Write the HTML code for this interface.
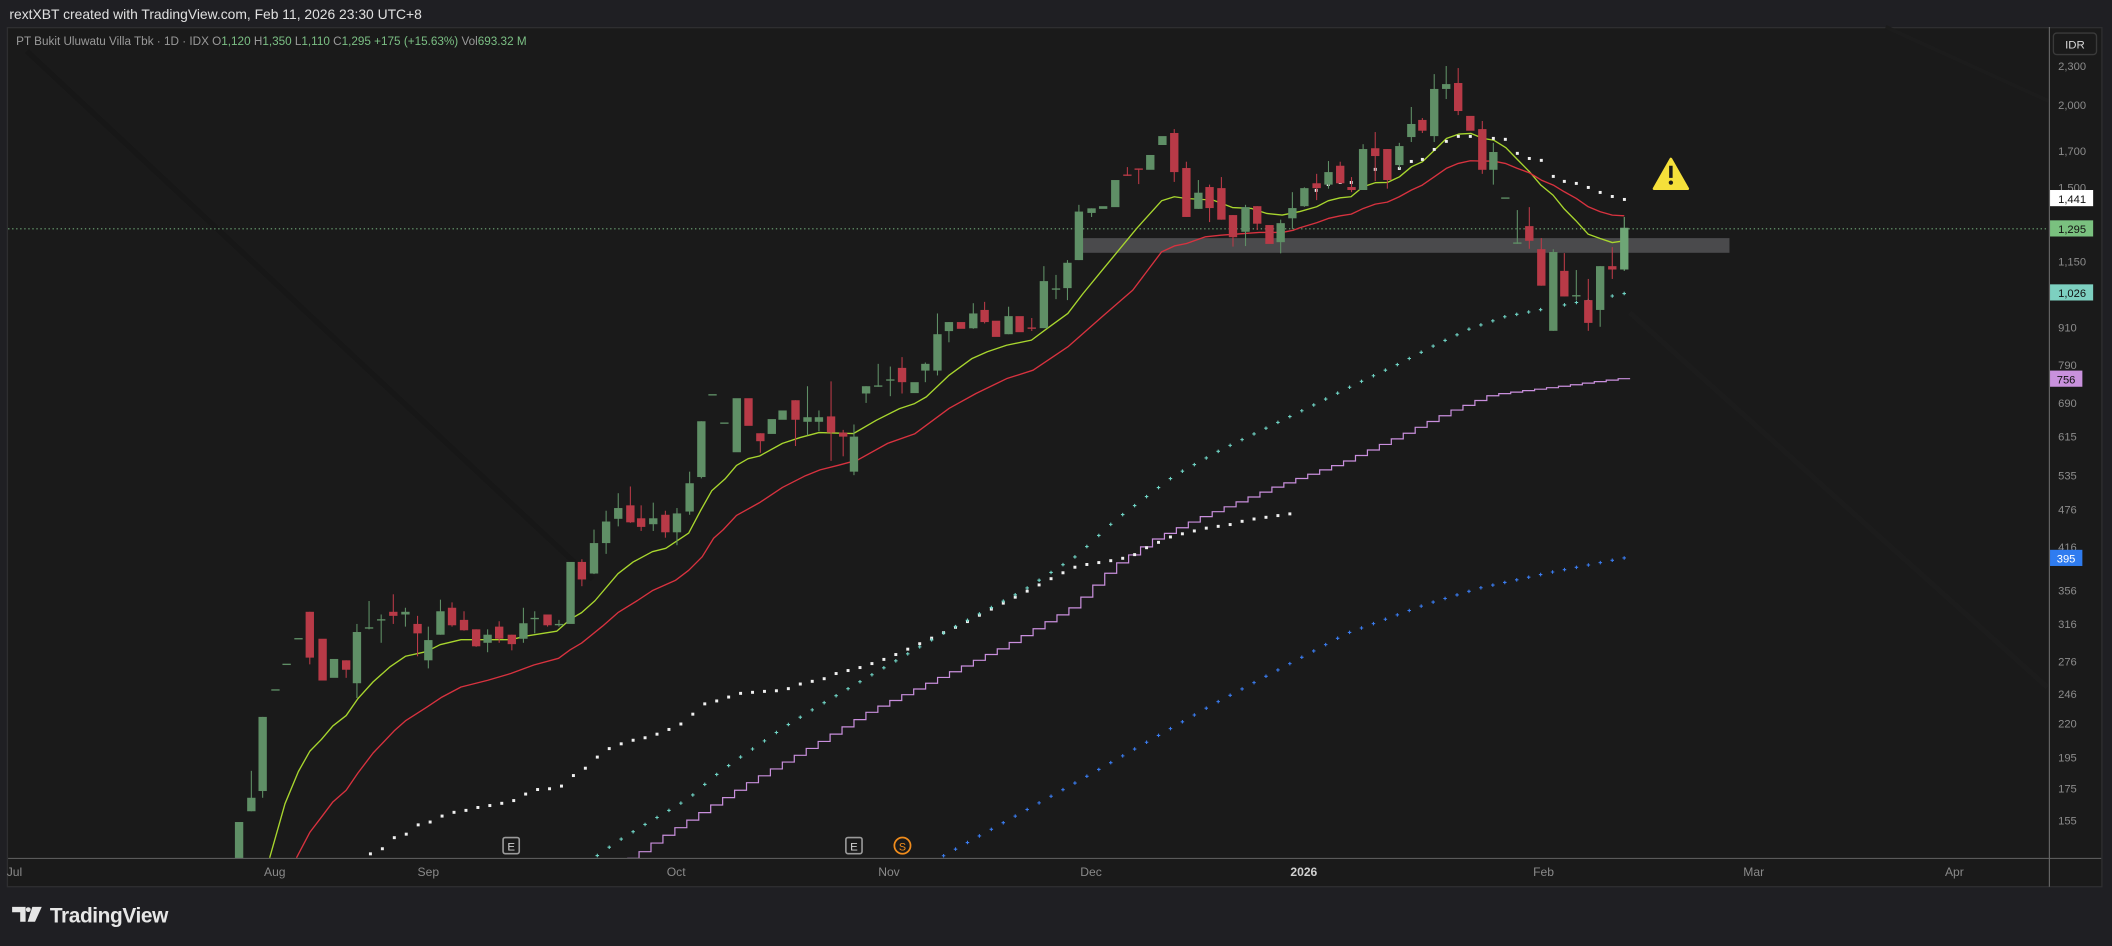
<!DOCTYPE html>
<html><head><meta charset="utf-8"><style>
html,body{margin:0;padding:0;background:#1f1f23;}
svg{display:block;}
text{font-family:"Liberation Sans","DejaVu Sans",sans-serif;}
</style></head><body>
<svg id="s" width="2112" height="946" viewBox="0 0 1568 702" preserveAspectRatio="none" xmlns="http://www.w3.org/2000/svg">
<rect x="0" y="0" width="1568" height="702" fill="#1f1f23"/>
<text x="7" y="14" font-size="10.3" fill="#e0e0e0">rextXBT created with TradingView.com, Feb 11, 2026 23:30 UTC+8</text>
<rect x="5.5" y="20.5" width="1555" height="637.5" fill="#1a1a1a" stroke="#2e2e30" stroke-width="1"/>
<line x1="20" y1="38" x2="440" y2="430" stroke="#171717" stroke-width="4"/>
<line x1="1210" y1="232" x2="1520" y2="510" stroke="#1c1c1c" stroke-width="4"/>
<line x1="1400" y1="20" x2="1521" y2="75" stroke="#1c1c1c" stroke-width="3"/>
<rect x="802" y="176.7" width="482" height="10.9" fill="#4a4a4c"/>
<line x1="6" y1="169.8" x2="1521" y2="169.8" stroke="#6fa877" stroke-width="0.8" stroke-dasharray="1,2"/>
<g id="ind"></g>
<g id="cd"></g>
<line x1="6" y1="637" x2="1560" y2="637" stroke="#5a5a5a" stroke-width="0.8"/>
<line x1="1521.5" y1="20" x2="1521.5" y2="658" stroke="#6a6a6a" stroke-width="0.8"/>
<text x="12" y="33.5" font-size="8.7" fill="#9a9a9a">PT Bukit Uluwatu Villa Tbk · 1D · IDX  <tspan>O</tspan><tspan fill="#7bbf84">1,120</tspan>  H<tspan fill="#7bbf84">1,350</tspan>  L<tspan fill="#7bbf84">1,110</tspan>  C<tspan fill="#7bbf84">1,295</tspan>  <tspan fill="#7bbf84">+175 (+15.63%)</tspan>  Vol<tspan fill="#7bbf84">693.32 M</tspan></text>
<path d="M1240.5 118 L1253 140 L1228 140 Z" fill="#f5e03a" stroke="#f5e03a" stroke-width="2" stroke-linejoin="round"/>
<rect x="1239.2" y="123" width="2.6" height="9" fill="#1a1a1a"/>
<circle cx="1240.5" cy="135.5" r="1.6" fill="#1a1a1a"/>
<rect x="373.5" y="621.5" width="12" height="12" rx="1.5" fill="#1a1a1a" stroke="#9a9a9a" stroke-width="1.2"/>
<text x="379.5" y="631" font-size="8.5" fill="#cfcfcf" text-anchor="middle">E</text>
<rect x="628" y="621.5" width="12" height="12" rx="1.5" fill="#1a1a1a" stroke="#9a9a9a" stroke-width="1.2"/>
<text x="634" y="631" font-size="8.5" fill="#cfcfcf" text-anchor="middle">E</text>
<circle cx="670" cy="627.5" r="6" fill="#1a1a1a" stroke="#f08c1c" stroke-width="1.3"/>
<text x="670" y="631" font-size="8" fill="#f08c1c" text-anchor="middle">S</text>
<g font-size="9" fill="#8a8a8a">
<text x="5" y="650">Jul</text>
<text x="204" y="650" text-anchor="middle">Aug</text>
<text x="318" y="650" text-anchor="middle">Sep</text>
<text x="502" y="650" text-anchor="middle">Oct</text>
<text x="660" y="650" text-anchor="middle">Nov</text>
<text x="810" y="650" text-anchor="middle">Dec</text>
<text x="968" y="650" text-anchor="middle" fill="#d0d0d0" font-weight="bold">2026</text>
<text x="1146" y="650" text-anchor="middle">Feb</text>
<text x="1302" y="650" text-anchor="middle">Mar</text>
<text x="1451" y="650" text-anchor="middle">Apr</text>
</g>
<rect x="1524.5" y="24.5" width="32" height="16" rx="2.5" fill="#1a1a1a" stroke="#3a3a3a"/>
<text x="1540.5" y="36" font-size="8.5" fill="#d8d8d8" text-anchor="middle">IDR</text>
<g font-size="8.3" fill="#8c8c8c">
<text x="1528" y="52">2,300</text>
<text x="1528" y="81">2,000</text>
<text x="1528" y="115">1,700</text>
<text x="1528" y="142">1,500</text>
<text x="1528" y="197">1,150</text>
<text x="1528" y="246">910</text>
<text x="1528" y="274">790</text>
<text x="1528" y="302">690</text>
<text x="1528" y="327">615</text>
<text x="1528" y="356">535</text>
<text x="1528" y="381">476</text>
<text x="1528" y="409">416</text>
<text x="1528" y="441">356</text>
<text x="1528" y="466">316</text>
<text x="1528" y="494">276</text>
<text x="1528" y="518">246</text>
<text x="1528" y="540">220</text>
<text x="1528" y="565">195</text>
<text x="1528" y="588">175</text>
<text x="1528" y="612">155</text>
</g>
<rect x="1522" y="141" width="32" height="12" fill="#ffffff"/>
<text x="1528" y="150.5" font-size="8.3" fill="#111">1,441</text>
<rect x="1522" y="163.5" width="32" height="12" fill="#7ac17f"/>
<text x="1528" y="173" font-size="8.3" fill="#111">1,295</text>
<rect x="1522" y="211" width="32" height="12" fill="#7dd0c0"/>
<text x="1528" y="220.5" font-size="8.3" fill="#111">1,026</text>
<rect x="1522" y="275" width="24" height="12" fill="#c991dd"/>
<text x="1527" y="284.5" font-size="8.3" fill="#111">756</text>
<rect x="1522" y="408" width="24" height="12" fill="#2f7cf0"/>
<text x="1527" y="417.5" font-size="8.3" fill="#fff">395</text>
<g fill="#e6e6e6">
<path d="M9 673 H19 V684 H15 V677 H9 Z"/>
<circle cx="21" cy="675" r="1.8"/>
<path d="M24 673 H31 L26 684 H20.5 Z"/>
</g>
<text x="37" y="684.5" font-size="15.5" font-weight="bold" fill="#e6e6e6" letter-spacing="-0.3">TradingView</text>
</svg>
<script>
var NS="http://www.w3.org/2000/svg";
function el(p,t,a){var e=document.createElementNS(NS,t);for(var k in a)e.setAttribute(k,a[k]);p.appendChild(e);return e;}
var G="#5f8f66",R="#b83a47";
var C=[
[177.5,610,637,0,0,G],[186.6,592,602,572,602,G],[195,532,587,532,592,G],[204.5,511.5,512.5,0,0,G],[212.8,492.5,493.5,0,0,G],[221.6,473.5,474.5,0,0,G],
[230,454,488,454,493,R],[239.5,474,505,0,0,R],[248,489,503,0,0,G],[257,490,497,490,503,R],[265,469,507,463,518,G],[274,465.5,466.5,446,467,G],
[283,459.5,460.5,456,477,G],[292,454,457,441,463,R],[301,454,456,451,465,G],[310,463,470,457,487,R],[318,475,490,465,496,G],[327,453.6,471,445,471,G],
[335.6,451,464,447,465,R],[344.5,460,467.7,453.6,468,R],[353.5,467,479.6,467,480,R],[362,471,477,467,484,G],[370.6,465,474,461,477,R],[380,471,478,471,482.6,R],
[388.6,462.5,474,451,477,G],[397,458.5,459.5,453.6,470,G],[406.5,456,464,456,465,R],[415,463,464,460,465,G],[423.6,417,463,0,0,G],[432,417,430,415,435,R],
[441,403,425.6,393,426,G],[450,387,403,379,411,G],[459,377,385,366,390.6,G],[468,375,387.6,361,388,R],[476,384.6,391,375,394,R],[485,384.6,389,373,394,G],
[494,382,395,379,399,R],[502.6,381,395,377,404.6,G],[512,358.6,379.6,350,382,G],[520.7,312.6,354,312.6,355,G],[529,292.5,293.5,0,0,G],[537.8,313.5,314.5,0,0,G],
[547,295.5,335.6,0,0,G],[555.7,295.5,316,0,0,R],[564.5,321.5,327.4,321.5,336,R],[573,311,322,0,0,G],[581,304.6,311.5,0,0,G],[590.6,297,311.5,297,331,R],
[599.5,309.6,313,286.6,323,G],[608,309.6,313,304.6,320,G],[617,309,321,283,342,R],[626,321,324,319,338.6,R],[634,324,350,315,352.6,G],[643,286.6,292,286.6,299,G],
[652,286,287,270,287,G],[661,281.5,282.5,272,294,G],[669.7,273,283.6,265,292,R],[679,283.6,291.7,0,0,G],[687,270,275,269,283.6,G],[696,248,275,232.6,278.6,G],
[704.5,239,245.7,239,254,G],[713.5,239,244,0,0,R],[722.6,232.6,243.6,225,244,G],[731,230,239,224,240,R],[739.5,238,250,0,0,R],[748.8,234.6,248,227.6,248,G],
[757,234.6,246.5,0,0,R],[766,243,244,236,245.6,R],[775,208.6,243.5,197.5,243.5,G],[784,214,215,204,222,G],[792.5,195,213.8,193,222.7,G],[801,157,193,152,193,G],
[810.4,154.6,158,154.6,161,G],[819,153,155,0,0,G],[828,133.6,153.7,0,0,G],[837,129.5,130.5,124,130.5,R],[845.4,125,126,125,136.6,R],[854,115,126,0,0,G],
[863,101,107.6,0,0,G],[871.8,98.7,127.7,95.8,135,R],[880.8,124.7,161,120,161,R],[889.7,143,155,133.6,155,G],[898,138.8,154.4,137,164.8,R],[906.8,139.6,163,131.4,163,R],
[915.4,159.6,176,159.6,183,R],[924.7,153.7,172,152,182.6,G],[933.4,153,166,153,170.7,R],[942.5,167,181,0,0,R],[950.8,165.6,179.7,163,188,G],[959.5,154.4,162,142.6,170,G],
[968.4,139.6,153,139,153.5,G],[977.5,136,139.6,129,148.5,R],[986.3,127.7,137,119.5,140,G],[995,123,136,120,136,R],[1003.4,138.8,141,131.4,142.6,R],[1012,110.6,141,107,141,G],
[1021,110,115.8,98,134.4,R],[1030,110.6,133.6,110.6,140,R],[1038.9,108.4,122.5,106,125,G],[1047.8,92,101.7,79.4,105.4,G],[1056,89,97,87.6,98.7,R],[1064.8,66,101,55,105.4,G],
[1073.7,62.4,66,49,73.5,G],[1082.6,61.6,82.4,50.5,85.4,R],[1091.6,86,97,0,0,R],[1100.5,95.8,126,89.8,129,R],[1108.7,112.8,126,106,137,G],[1117.6,146.5,147.5,0,0,G],
[1126.5,179.9,180.9,155.9,180.9,G],[1135.4,167.8,178.7,153.7,184.6,R],[1144.3,184.9,212,176.7,212,R],[1153.2,187,245.5,185,245.5,G],[1161.4,201,220,187.8,220,R],
[1170.3,219,220,200.4,222.7,G],[1179.2,222.7,239.6,207,245.5,R],[1188,197.5,230,197.5,242.5,G],[1197,197.5,200,183.4,207,R],[1205.9,169,200,161,201,"#6ea676"]
];
var ind=document.getElementById("ind"),cd=document.getElementById("cd");
function interp(P,x){if(x<=P[0][0])return P[0][1];for(var i=1;i<P.length;i++){if(x<=P[i][0]){var a=P[i-1],b=P[i];return a[1]+(b[1]-a[1])*(x-a[0])/(b[0]-a[0]);}}return P[P.length-1][1];}
function pl(P,col,w){el(ind,"polyline",{points:P.map(function(p){return p.join(",")}).join(" "),fill:"none",stroke:col,"stroke-width":w,"stroke-linejoin":"round"});}
var xs=[];for(var i=0;i<=116;i++)xs.push(177.5+i*8.865);
var PU=[[472,637],[490,624],[520,605],[560,580],[609,552],[650,527],[700,503],[750,479],[800,450],[830,420],[860,400],[894,384],[950,361],[1000,343],[1039,325],[1080,305],[1110,293],[1150,288],[1206,281]];
var d="";xs.forEach(function(x){if(x<468)return;var y=interp(PU,x);if(!d)d="M"+(x-4.4)+" "+637+" V"+y.toFixed(1);else d+=" V"+y.toFixed(1);d+=" H"+(x+4.4);});
el(ind,"path",{d:d,fill:"none",stroke:"#c98fdd","stroke-width":0.9});
pl([[200.2,636.6],[211.6,596.4],[221.5,572.6],[230,557.5],[238.6,548.7],[247.1,538.7],[257,531],[265.6,518.6],[277,506],[289.7,494.7],[301,487],[316.7,483.5],[326.7,478.4],[342.3,474.7],[379.2,474.7],[390.6,472],[413.3,468.4],[423.3,459.6],[431.8,454.6],[441.7,445.8],[458.8,425.7],[470.1,417],[484.3,409.4],[494.3,406.9],[511.3,395.6],[519.9,379.3],[528.4,364.2],[538.3,355.4],[546.8,345.4],[555.4,340.4],[563.9,338.4],[580.9,329],[594,324.7],[608,321],[633.7,321.7],[650.7,311.8],[667.8,303.2],[679,299.5],[687.7,294.5],[704.7,278.4],[721.7,266],[733,261],[747.3,256.2],[765.8,252.4],[775.7,245],[792.8,232.6],[804.1,217.8],[818.3,200.5],[843.9,169.5],[862.4,149],[871.8,146],[880.8,147.3],[900.7,148.5],[915,154],[929.2,154.7],[940.5,158.4],[951.9,159.6],[965,157],[977.5,153.4],[986,149],[995,146.8],[1003,146],[1012,138.6],[1021,135.6],[1030,135.4],[1039,131.2],[1048,123.7],[1056,120],[1065,111.4],[1074,102.7],[1083,99.5],[1092,99],[1101,102.7],[1109,104],[1118,109.6],[1127,118.8],[1135.6,127.5],[1144,137.4],[1153,144.8],[1161,154.7],[1170,163.8],[1179,173.7],[1188,177],[1197,180],[1206,178.7]],"#a8d62e",1);
var z6r=[[0,533],[50,518],[85,505],[121,497],[154,492],[190,475],[226,462],[262,456],[298,440],[334,420],[367,405],[403,380],[439,355],[475,340],[511,332],[547,333],[580,333],[616,340],[652,355],[688,368],[724,390],[760,405],[793,425],[829,445],[865,470],[901,485],[937,495],[973,497]].map(function(p){return [965.1+p[0]*0.2475,37.12+p[1]*0.2475];});
pl([[220.1,636.6],[230,617.7],[238.6,606.4],[247.1,595.1],[257,586.4],[265.6,573.8],[277,558.8],[292.6,542.4],[301,534.9],[316.7,524.9],[328.1,517.3],[342.3,509.8],[362.2,504.8],[379.2,499.8],[396.3,493.5],[414.7,488.5],[423.3,482.2],[431.8,477.2],[447.4,464.6],[458.8,454.6],[473,445.8],[484.3,438.3],[501.4,430.7],[511.3,423.2],[521.3,413.2],[529.8,399.4],[536.9,393.1],[546.8,382.5],[563.9,373],[580.9,361.7],[598,353],[608.8,348.7],[622.3,345.3],[636.5,341.5],[659,329],[679,322],[704.7,303],[724.6,292],[747.3,281],[767,274.7],[792.8,257.4],[818.3,235],[841,215.3],[862.4,186.9],[872.3,182.4],[880.9,180.7],[895,175.7],[906.4,174.5],[935,172.5],[951.9,172.5],[960.4,170.8]].concat(z6r),"#d8323f",1);
var WL=[[274,634],[283.2,630.5],[292,621.8],[301,619.5],[310,612.2],[318,610.7],[327,606],[335.7,603],[344.6,601.7],[353.6,599.4],[362.5,598],[370.7,596.4],[379.8,595],[388.6,590],[397.4,586],[406.5,585.4],[415.3,584.9],[423.5,576.6],[432.3,572.3],[441,563.8],[450,556.5],[459,552.7],[468,549.7],[476,548.2],[484.9,546],[494,542.2],[502.8,539.2],[512,532.6],[520.7,522.9],[529,521],[537.8,518.6],[546.8,514.8],[555.6,514],[564.4,513.3],[573.3,512.6],[581.5,512.6],[590.6,508.8],[599.4,505.8],[608.2,505.3],[620,500],[640,495],[660,488],[680,479],[695,472],[715,463],[730,455],[760,440],[785,427],[800,420],[825,416],[840,413],[850,407],[870,398],[895,392],[915,389],[925,386],[960,381]];
xs.forEach(function(x){if(x<272||x>962)return;el(ind,"rect",{x:x-1.1,y:interp(WL,x)-1.1,width:2.2,height:2.2,fill:"#f0f0f0"});});
var WU=[[968.4,144.3],[977.2,141.3],[986.1,136.9],[995,135.4],[1003.2,135.4],[1012.1,130.2],[1021,125.7],[1030,126.5],[1038.9,125],[1047.8,119.8],[1056,118.3],[1064.8,110.9],[1073.8,104.9],[1082.7,101.2],[1091.6,101.2],[1100.5,102],[1108.7,102.7],[1117.6,103.4],[1126.5,113.8],[1135.4,117.6],[1144.3,119],[1153.2,130.9],[1161.4,134.6],[1170.3,136.1],[1179.2,139.1],[1188,142.8],[1197,145.8],[1206,148]];
WU.forEach(function(p){el(ind,"rect",{x:p[0]-1.1,y:p[1]-1.1,width:2.2,height:2.2,fill:"#f0f0f0"});});
function cross(x,y,c){el(ind,"path",{d:"M"+(x-1.3)+" "+y+"h2.6M"+x+" "+(y-1.3)+"v2.6",stroke:c,"stroke-width":0.8});}
var TL=[[441,636.6],[459,624],[476,613.5],[494,603],[512,592],[529,577],[546.8,563.8],[564.4,552],[581.5,540],[599.4,529],[608.2,523.6],[640,505],[700,470],[760,438],[800,412],[828,386],[871.8,353],[906.8,333.6],[942.5,316.5],[977.4,299.5],[1012,282.4],[1039,269.8],[1064.8,256.4],[1091.6,243.8],[1117.6,234.9],[1144.3,229.7],[1170.3,224.5],[1188,221.5],[1206,217.8]];
xs.forEach(function(x){if(x<438)return;cross(x,interp(TL,x),"#6fd3c4");});
var BL=[[697,637],[800,580],[900,523],[1000,470],[1060,448],[1100,436],[1150,425],[1206,414]];
xs.forEach(function(x){if(x<695)return;cross(x,interp(BL,x),"#3a7cf0");});
C.forEach(function(c){var x=c[0],t=c[1],b=c[2],h=c[3]||t,l=c[4]||b,col=c[5];
 if(h<t||l>b)el(cd,"line",{x1:x,y1:h,x2:x,y2:l,stroke:col,"stroke-width":0.8});
 el(cd,"rect",{x:x-3.1,y:t,width:6.2,height:Math.max(b-t,1),fill:col});});
</script>
</body></html>
